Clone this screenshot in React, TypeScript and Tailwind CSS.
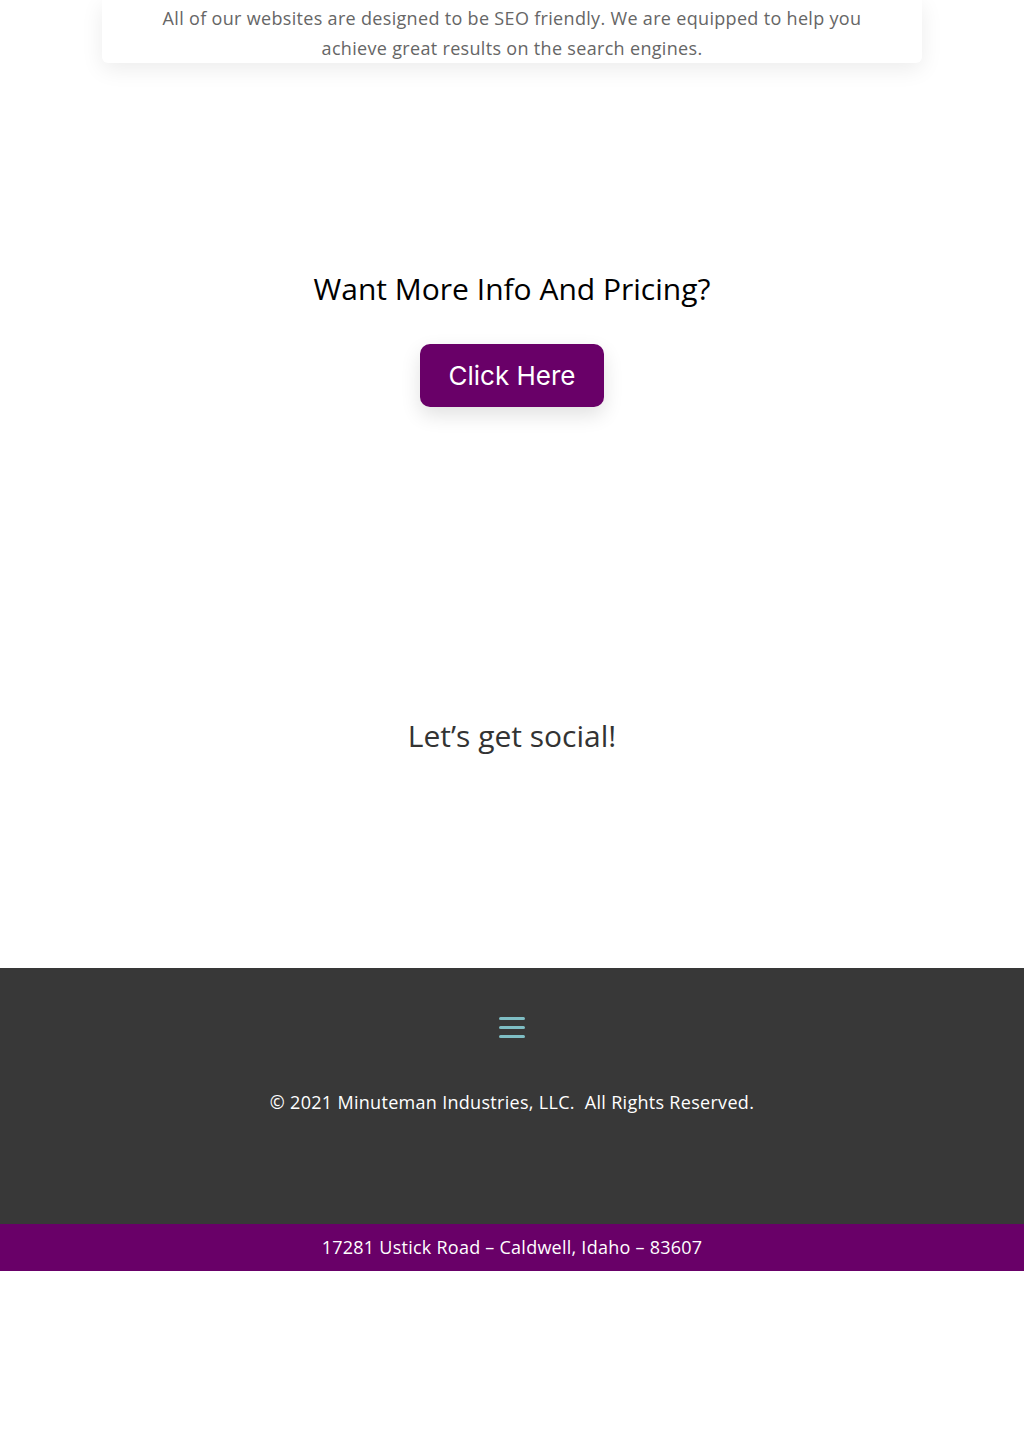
const App = () => {
  return (
    <div className="min-h-[1449px] bg-white flex flex-col" style={{ fontFamily: "'Open Sans', sans-serif" }}>
      {/* SEO card (top cut off) */}
      <div className="px-[102px]">
        <div className="bg-white rounded-b-[6px] shadow-[0_6px_22px_rgba(0,0,0,0.08)] pt-[3px] pb-0 px-[40px]">
          <p className="text-center text-[18px] leading-[30px] tracking-[0.32px] text-[#666666]">
            All of our websites are designed to be SEO friendly. We are equipped to help you
            <br />
            achieve great results on the search engines.
          </p>
        </div>
      </div>

      {/* Pricing CTA */}
      <div className="flex flex-col items-center pt-[208px]">
        <h2 className="text-[30px] leading-[36px] text-black">Want More Info And Pricing?</h2>
        <button
          className="mt-[37px] w-[184px] h-[63px] rounded-[10px] bg-[#690068] text-white text-[26px] shadow-[0_8px_20px_rgba(0,0,0,0.12)]"
          style={{ fontFamily: "Inter, 'Noto Sans', sans-serif" }}
        >
          Click Here
        </button>
      </div>

      {/* Social */}
      <div className="flex justify-center pt-[311px] pb-[214px]">
        <h3 className="text-[30px] leading-[36px] text-[#333333]">Let’s get social!</h3>
      </div>

      {/* Footer */}
      <footer className="bg-[#383838] h-[256px] flex flex-col items-center pt-[49px]">
        <div className="flex flex-col gap-[6px] w-[26px]">
          <span className="block h-[3px] rounded-full bg-[#7fbec4]" />
          <span className="block h-[3px] rounded-full bg-[#7fbec4]" />
          <span className="block h-[3px] rounded-full bg-[#7fbec4]" />
        </div>
        <p className="mt-[51px] text-[18px] leading-[26px] tracking-[0.3px] text-white">
          © 2021 Minuteman Industries, LLC.&nbsp; All Rights Reserved.
        </p>
      </footer>
      <div className="bg-[#690068] h-[47px] flex items-center justify-center">
        <p className="text-[18px] tracking-[0.25px] text-white">17281 Ustick Road – Caldwell, Idaho – 83607</p>
      </div>
    </div>
  );
};

export default App;
